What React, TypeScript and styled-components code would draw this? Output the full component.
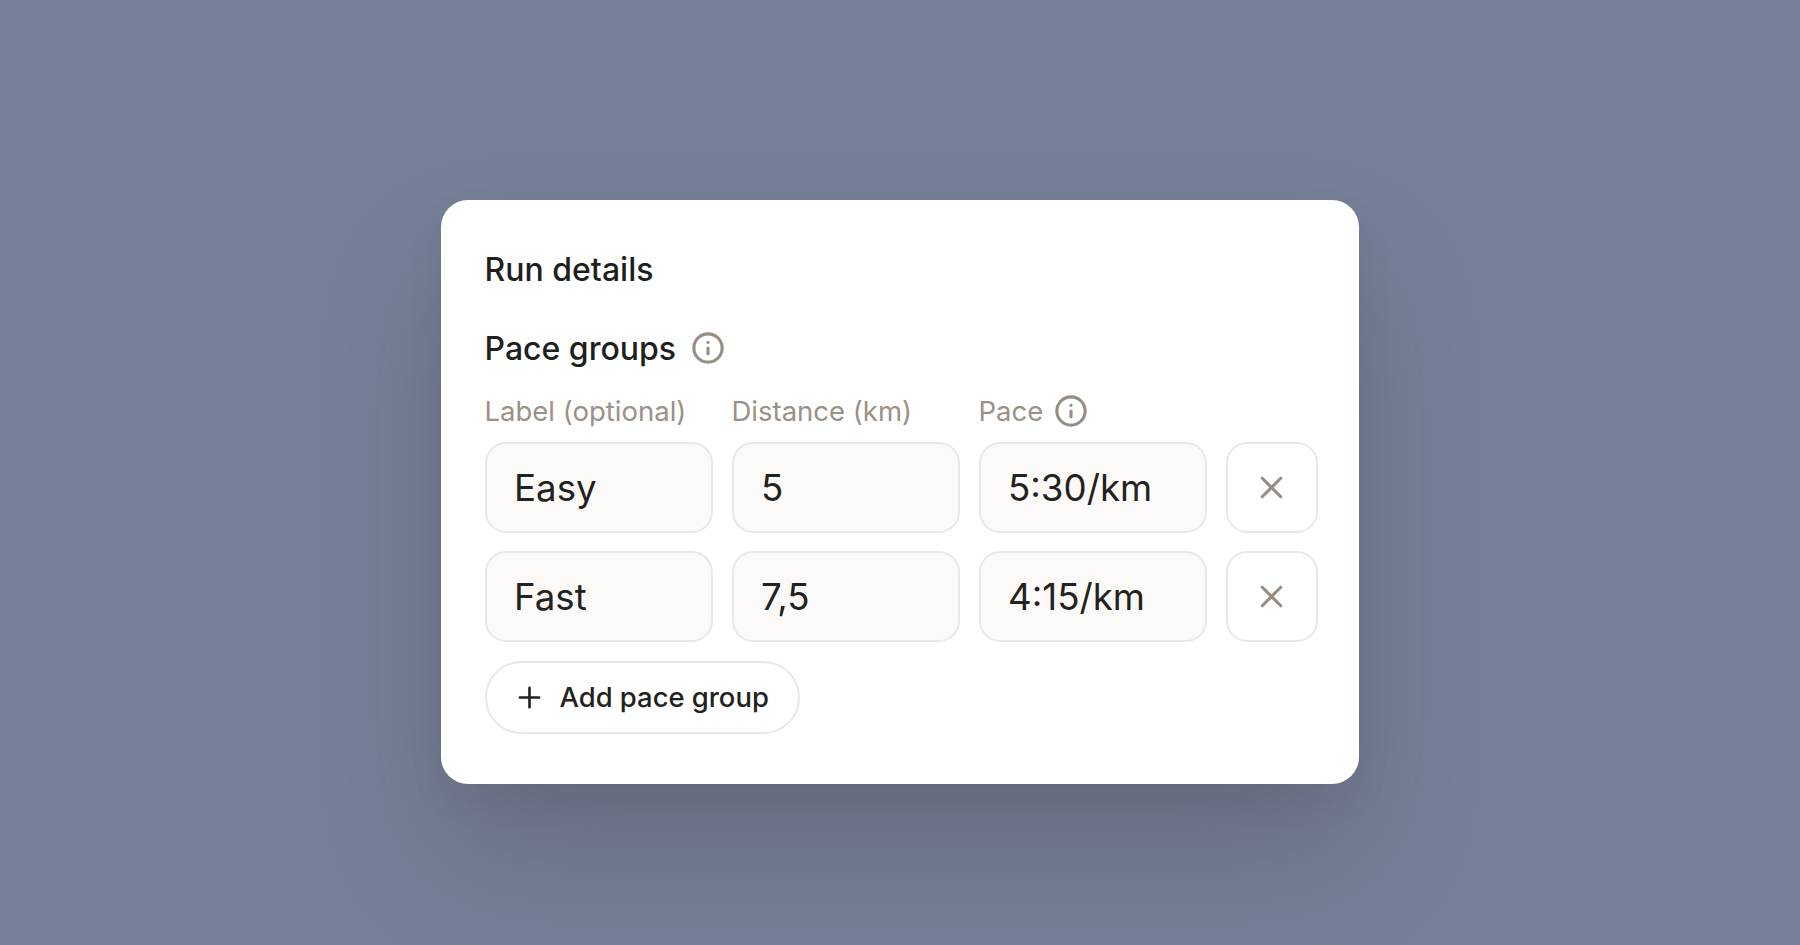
import React from "react";
import styled, { createGlobalStyle } from "styled-components";
import { Info, Plus, X } from "lucide-react";

const GlobalStyle = createGlobalStyle`
  html, body {
    margin: 0;
    height: 100%;
  }
  body {
    background: #768098;
    font-family: Inter, "Liberation Sans", sans-serif;
    -webkit-font-smoothing: antialiased;
  }
`;

const Page = styled.div`
  box-sizing: border-box;
  height: 945px;
  overflow: hidden;
  padding-top: 199.5px;
  display: flex;
  justify-content: center;
  align-items: flex-start;
`;

const Card = styled.section`
  box-sizing: border-box;
  width: 918px;
  height: 584.5px;
  padding: 47.5px 41px 0 43.5px;
  background: #fff;
  border-radius: 27px;
  box-shadow: 0 72px 128px rgba(30, 30, 30, 0.19), 0 16px 40px rgba(30, 30, 30, 0.05);
`;

const Title = styled.h2`
  margin: 0;
  font-size: 32px;
  line-height: 46px;
  font-weight: 500;
  color: #211f1d;
`;

const SectionTitle = styled.h3`
  margin: 33px 0 23px;
  display: flex;
  align-items: center;
  gap: 15px;
  font-size: 32px;
  line-height: 46px;
  font-weight: 500;
  color: #211f1d;
  svg {
    color: #968d83;
    margin-top: -2px;
  }
`;

const Grid = styled.div`
  display: grid;
  grid-template-columns: 228px 228px 228px 92px;
  column-gap: 19px;
  row-gap: 18px;
`;

const Label = styled.div`
  display: flex;
  align-items: center;
  gap: 11px;
  height: 32px;
  margin-bottom: -3.5px;
  font-size: 27.5px;
  line-height: 32px;
  color: #9a9187;
  white-space: nowrap;
  svg {
    color: #968d83;
  }
`;

const Field = styled.div`
  box-sizing: border-box;
  height: 91px;
  padding: 0 27.5px;
  display: flex;
  align-items: center;
  background: #fbfaf8;
  border: 2px solid #ebe8e4;
  border-radius: 21px;
  font-size: 36.7px;
  color: #242220;
`;

const RemoveButton = styled.button`
  box-sizing: border-box;
  height: 91px;
  padding: 0;
  display: flex;
  align-items: center;
  justify-content: center;
  background: #fff;
  border: 2px solid #ebe8e4;
  border-radius: 21px;
  color: #968d83;
`;

const AddButton = styled.button`
  box-sizing: border-box;
  height: 73px;
  margin-top: 19px;
  padding: 0 29px 0 26px;
  display: inline-flex;
  align-items: center;
  gap: 14px;
  background: #fff;
  border: 2px solid #ebe8e4;
  border-radius: 36.5px;
  font-family: inherit;
  font-size: 27.4px;
  font-weight: 500;
  color: #242220;
`;

const rows = [
  { label: "Easy", distance: "5", pace: "5:30/km" },
  { label: "Fast", distance: "7,5", pace: "4:15/km" },
];

export default function App() {
  return (
    <Page>
      <GlobalStyle />
      <Card>
        <Title>Run details</Title>
        <SectionTitle>
          Pace groups
          <Info size={34} strokeWidth={2.2} />
        </SectionTitle>
        <Grid>
          <Label>Label (optional)</Label>
          <Label>Distance (km)</Label>
          <Label>
            Pace
            <Info size={34} strokeWidth={2.2} />
          </Label>
          <div />
          {rows.map((row) => (
            <React.Fragment key={row.label}>
              <Field>{row.label}</Field>
              <Field>{row.distance}</Field>
              <Field>{row.pace}</Field>
              <RemoveButton aria-label={`Remove ${row.label}`}>
                <X size={37} strokeWidth={2} />
              </RemoveButton>
            </React.Fragment>
          ))}
        </Grid>
        <AddButton>
          <Plus size={33} strokeWidth={1.9} />
          Add pace group
        </AddButton>
      </Card>
    </Page>
  );
}
